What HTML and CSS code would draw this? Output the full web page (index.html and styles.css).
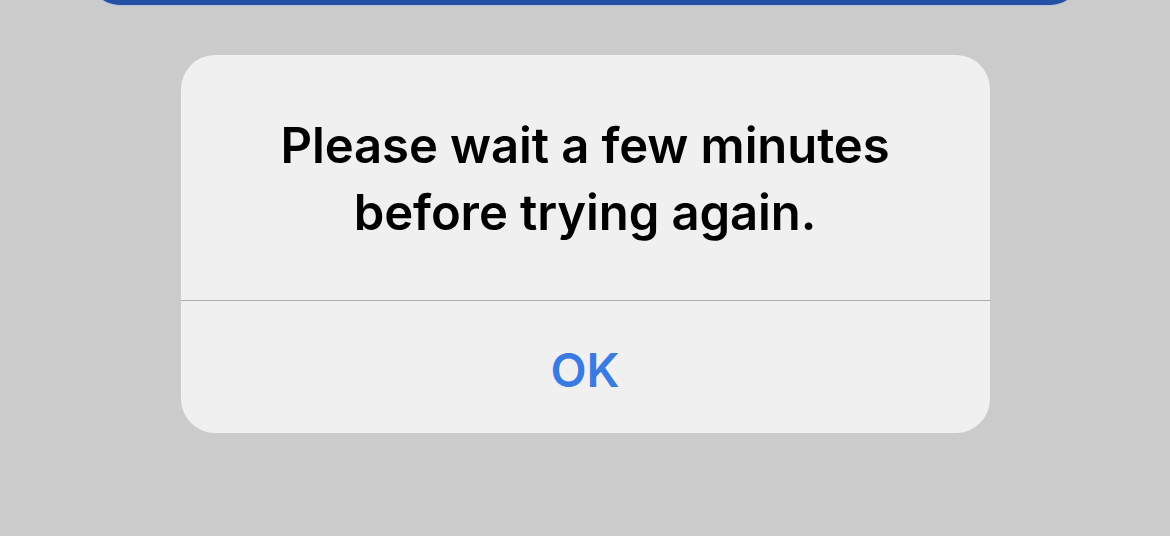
FILE: index.html
```html
<!DOCTYPE html>
<html lang="en">
  <head>
    <meta charset="UTF-8" />
    <meta name="viewport" content="width=device-width, initial-scale=1.0" />
    <title>Alert</title>
    <link rel="stylesheet" href="styles.css">
  </head>
  <body>
    <div class="top-bar"></div>
    <div class="alert">
      <div class="message">
        Please wait a few minutes<br />before trying again.
      </div>
      <button class="ok-btn">OK</button>
    </div>
  </body>
</html>
```
FILE: styles.css
```css
* {
  margin: 0;
  padding: 0;
  box-sizing: border-box;
}
body {
  background-color: #cbcbcb;
  font-family: Inter, "Noto Sans", sans-serif;
  height: 536px;
  overflow: hidden;
}
.top-bar {
  width: 988px;
  height: 55px;
  margin: -50px auto 0;
  background-color: #2451a6;
  border-radius: 0 0 28px 28px;
  box-shadow: 0 1px 1px #b4c2dc;
}
.alert {
  width: 809px;
  margin: 50px auto 0;
  background-color: #f0f0f0;
  border-radius: 34px;
  overflow: hidden;
}
.message {
  padding: 57px 20px 54px;
  text-align: center;
  font-size: 49px;
  font-weight: 600;
  line-height: 67px;
  letter-spacing: -0.1px;
  color: #000;
  border-bottom: 1px solid #acacac;
}
.ok-btn {
  display: block;
  width: 100%;
  height: 132px;
  padding-top: 4px;
  border: none;
  background: none;
  font-family: inherit;
  font-size: 47px;
  font-weight: 600;
  color: #3a7be2;
  cursor: pointer;
}
```
